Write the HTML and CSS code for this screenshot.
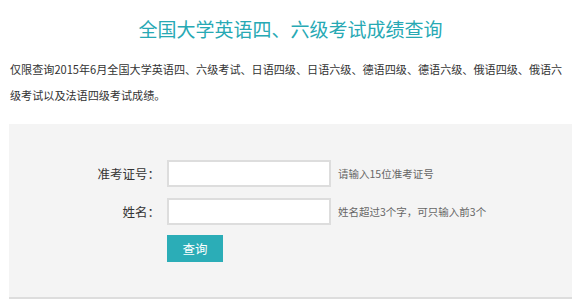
FILE: index.html
```html
<!DOCTYPE html>
<html lang="zh-CN">
<head>
    <meta charset="UTF-8">
    <meta name="viewport" content="width=device-width, initial-scale=1.0">
    <title>全国大学英语四、六级考试成绩查询</title>
    <link rel="stylesheet" href="styles.css">
</head>
<body>
    <div class="wrap">
        <h1>全国大学英语四、六级考试成绩查询</h1>
        <p class="note">仅限查询2015年6月全国大学英语四、六级考试、日语四级、日语六级、德语四级、德语六级、俄语四级、俄语六级考试以及法语四级考试成绩。</p>

        <div class="query-box">
            <form class="query-form" onsubmit="return false">
                <label for="zkzh">准考证号：</label>
                <input type="text" id="zkzh" maxlength="15">
                <span class="hint">请输入15位准考证号</span>

                <label for="xm">姓名：</label>
                <input type="text" id="xm">
                <span class="hint">姓名超过3个字，可只输入前3个</span>

                <button type="submit" class="btn">查询</button>
            </form>
        </div>
    </div>
</body>
</html>
```

FILE: styles.css
```css
body { margin: 0; font-family: "Noto Sans CJK SC", "Noto Sans", sans-serif; color: #333; background: #fff; }
.wrap { padding: 0 4px 0 9px; }
h1 { margin: 0; padding-top: 16px; font-size: 19px; line-height: 26px; font-weight: normal; color: #27a9b4; text-align: center; }
.note { margin: 14px 2px 0 0; padding-left: 1px; font-size: 11.1px; line-height: 26px; }
.query-box { margin-top: 16px; background: #f4f4f4; border-bottom: 2px solid #dddddd; padding: 36px 0 35px; }
.query-form { display: grid; grid-template-columns: 151px 164px auto; column-gap: 7px; row-gap: 11px; align-items: center; }
.query-form label { text-align: right; font-size: 12.5px; color: #333; }
.query-form input { box-sizing: border-box; width: 164px; height: 27px; border: 2px solid #dddddd; background: #fff; margin: 0; padding: 0 6px; outline: none; }
.hint { font-size: 10.5px; color: #666; }
.btn { grid-column: 2; justify-self: start; margin-top: -1px; width: 56px; height: 27px; border: 0; background: #2badb7; color: #fff; font-family: inherit; font-size: 12.5px; cursor: pointer; }
```
